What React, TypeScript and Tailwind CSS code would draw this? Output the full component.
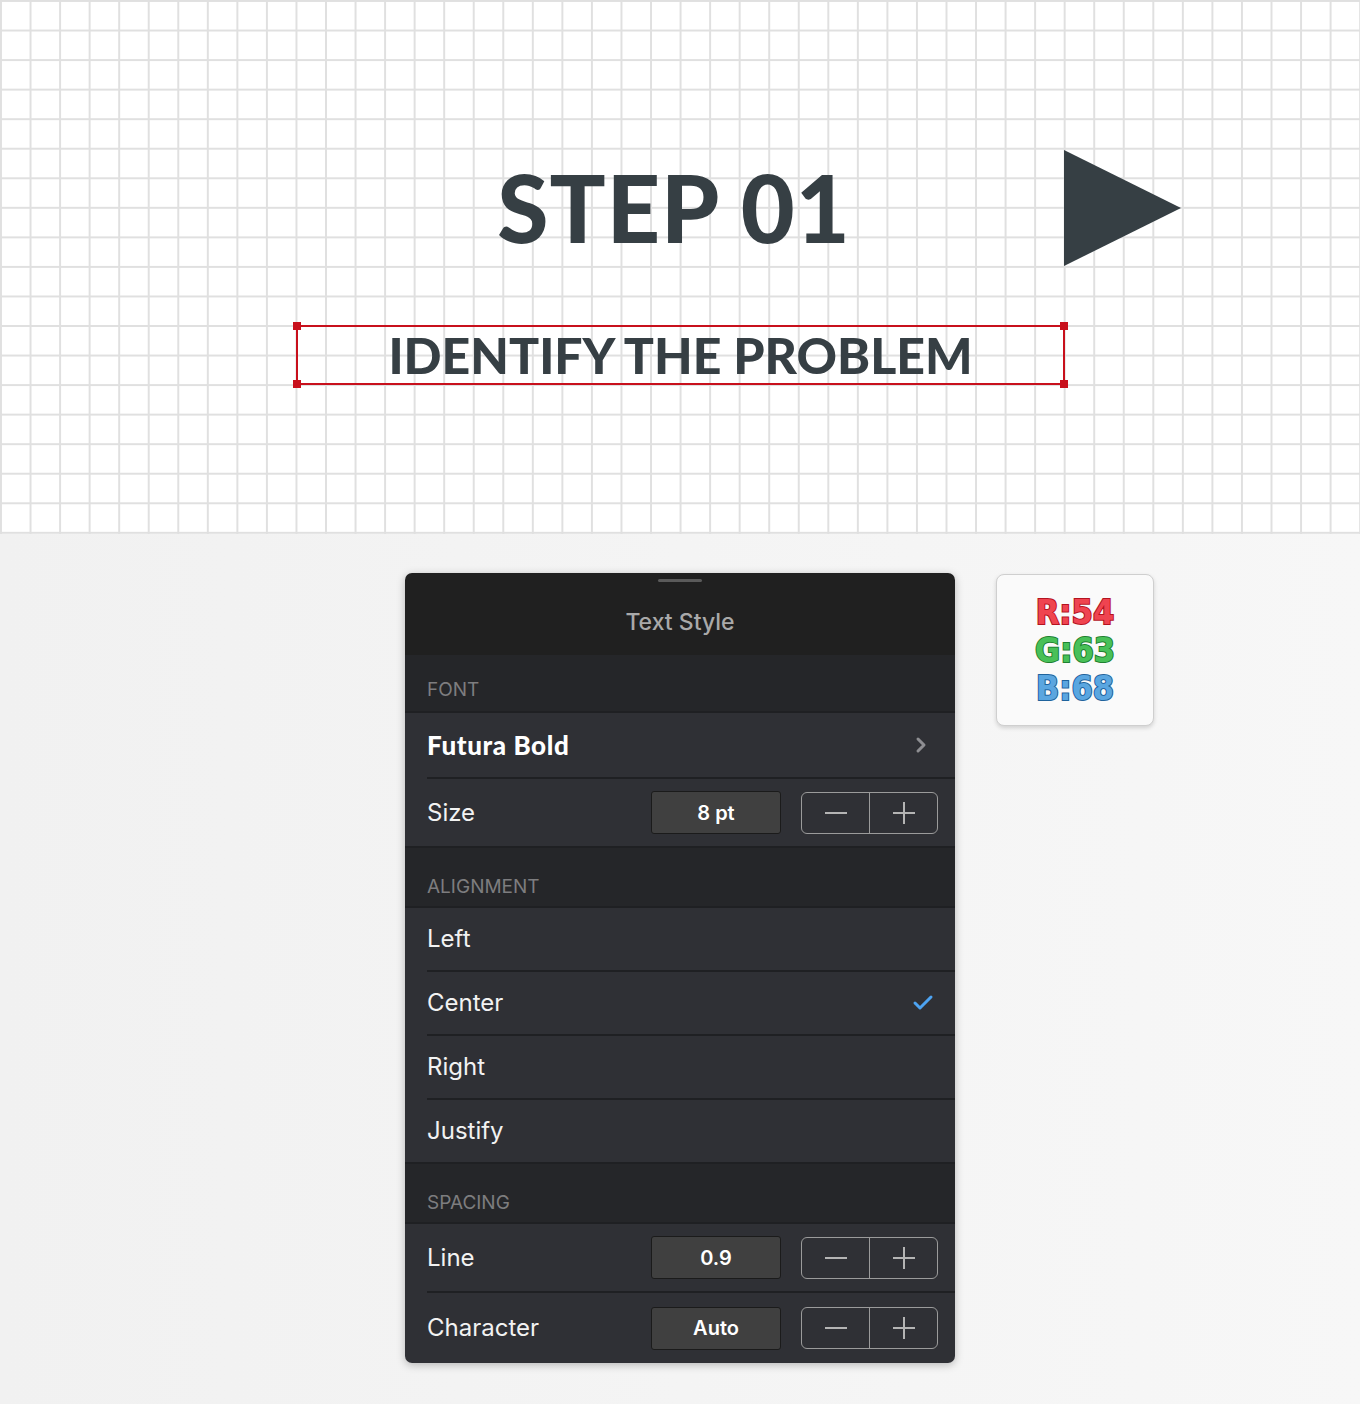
import { Check, ChevronRight } from "lucide-react";

const ui = "font-['Inter','Noto_Sans',sans-serif]";
const futura = "font-['Lato','Inter',sans-serif]";

function Stepper() {
  return (
    <div className="flex h-[42px] w-[137px] rounded-[6px] border-[1.5px] border-[#9b9b9b]">
      <div className="flex flex-1 items-center justify-center border-r-[1.5px] border-[#9b9b9b]">
        <div className="h-[2px] w-[22px] bg-[#b4b4b4]" />
      </div>
      <div className="relative flex flex-1 items-center justify-center">
        <div className="h-[2px] w-[22px] bg-[#b4b4b4]" />
        <div className="absolute h-[22px] w-[2px] bg-[#b4b4b4]" />
      </div>
    </div>
  );
}

function ValueRow({ label, value, h }: { label: string; value: string; h: string }) {
  return (
    <div className={`flex items-center bg-[#2f3035] pl-[22px] pr-[17px] ${h}`}>
      <span className="flex-1 text-[24px] text-[#f2f2f2]">{label}</span>
      <div className="flex h-[43px] w-[130px] items-center justify-center rounded-[3px] border border-[#1b1b1b] bg-[#404040] text-[20px] font-semibold text-white">
        {value}
      </div>
      <div className="ml-[20px]">
        <Stepper />
      </div>
    </div>
  );
}

function SectionHeader({ title, h, pb }: { title: string; h: string; pb: string }) {
  return (
    <div className={`flex items-end bg-[#252629] pl-[22px] text-[19px] uppercase text-[#7d7d7f] ${h} ${pb}`}>
      {title}
    </div>
  );
}

function Divider() {
  return (
    <div className="bg-[#2f3035]">
      <div className="ml-[22px] h-[2px] bg-[#1f2023]" />
    </div>
  );
}

function OptionRow({ label, checked }: { label: string; checked?: boolean }) {
  return (
    <div className="flex h-[62px] items-center justify-between bg-[#2f3035] pl-[22px] pr-[20px]">
      <span className="text-[24px] text-[#f2f2f2]">{label}</span>
      {checked && <Check size={24} strokeWidth={3} className="text-[#4da3f2]" />}
    </div>
  );
}

export default function App() {
  return (
    <div className={`min-h-[1404px] w-[1360px] bg-gradient-to-r from-[#f1f1f1] to-[#f7f7f7] ${ui}`}>
      {/* canvas */}
      <div className="relative h-[534px] w-full bg-white bg-[linear-gradient(to_right,#e0e0e0_1.5px,transparent_1.5px),linear-gradient(to_bottom,#e0e0e0_1.5px,transparent_1.5px)] bg-size-[29.56px_29.56px]">
        <div className="flex flex-col items-center pt-[153px]">
          <div className={`pr-[12px] text-[93px] font-black leading-[108px] tracking-[1px] text-[#363f44] ${futura}`}>
            STEP 01
          </div>
        </div>

        {/* triangle */}
        <svg className="absolute left-[1064px] top-[150px]" width="118" height="117" viewBox="0 0 118 117">
          <polygon points="0,0 0,116 117,58" fill="#363f44" />
        </svg>

        {/* selection box */}
        <div className="absolute left-[296px] top-[325px] flex h-[60px] w-[769px] items-center justify-center border-2 border-[#c8101c]">
          <span className={`text-[50px] font-black leading-none text-[#363f44] ${futura}`}>
            IDENTIFY THE PROBLEM
          </span>
          <span className="absolute -left-[5px] -top-[5px] h-[8px] w-[8px] bg-[#c8101c]" />
          <span className="absolute -right-[5px] -top-[5px] h-[8px] w-[8px] bg-[#c8101c]" />
          <span className="absolute -bottom-[5px] -left-[5px] h-[8px] w-[8px] bg-[#c8101c]" />
          <span className="absolute -bottom-[5px] -right-[5px] h-[8px] w-[8px] bg-[#c8101c]" />
        </div>
      </div>

      {/* lower area */}
      <div className="flex items-start gap-[41px] pl-[405px] pt-[39px]">
        <div className="w-[550px] overflow-hidden rounded-[7px] shadow-[0_2px_8px_rgba(0,0,0,0.25)]">
          <div className="flex h-[82px] flex-col items-center bg-[#202020]">
            <div className="mt-[6px] h-[3px] w-[44px] rounded-full bg-[#5a5a5a]" />
            <div className="mt-[23px] text-[23px] font-medium text-[#a9a9a9]">Text Style</div>
          </div>

          <SectionHeader title="Font" h="h-[56px]" pb="pb-[7px]" />
          <div className="h-[2px] bg-[#1f2023]" />
          <div className="flex h-[64px] items-center justify-between bg-[#2f3035] pl-[22px] pr-[22px]">
            <span className={`text-[26px] font-black tracking-[0.6px] text-white ${futura}`}>Futura Bold</span>
            <ChevronRight size={24} strokeWidth={3} className="text-[#8e8e92]" />
          </div>
          <Divider />
          <ValueRow label="Size" value="8 pt" h="h-[67px]" />
          <div className="h-[2px] bg-[#1f2023]" />

          <SectionHeader title="Alignment" h="h-[58px]" pb="pb-[5px]" />
          <div className="h-[2px] bg-[#1f2023]" />
          <OptionRow label="Left" />
          <Divider />
          <OptionRow label="Center" checked />
          <Divider />
          <OptionRow label="Right" />
          <Divider />
          <OptionRow label="Justify" />
          <div className="h-[2px] bg-[#1f2023]" />

          <SectionHeader title="Spacing" h="h-[58px]" pb="pb-[5px]" />
          <div className="h-[2px] bg-[#1f2023]" />
          <ValueRow label="Line" value="0.9" h="h-[67px]" />
          <Divider />
          <ValueRow label="Character" value="Auto" h="h-[70px]" />
        </div>

        {/* colour badge */}
        <div className="mt-[1px] flex h-[152px] w-[158px] flex-col items-center justify-center rounded-[8px] border border-[#cfcfcf] bg-[#fafafa] shadow-[0_2px_4px_rgba(0,0,0,0.15)]">
          <div className="flex flex-col items-center font-['DejaVu_Sans_Condensed','DejaVu_Sans',sans-serif] text-[34px] font-bold leading-[38px] [paint-order:stroke_fill]">
            <span className="text-[#ef4450] [-webkit-text-stroke:2px_#b3131f]">R:54</span>
            <span className="text-[#48c058] [-webkit-text-stroke:2px_#1f8030]">G:63</span>
            <span className="text-[#5aa6e0] [-webkit-text-stroke:2px_#1f639c]">B:68</span>
          </div>
        </div>
      </div>
    </div>
  );
}
